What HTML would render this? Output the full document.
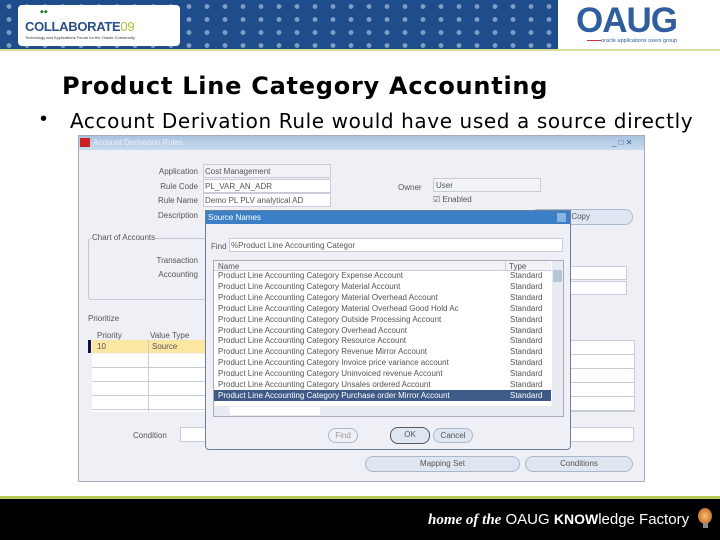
<!DOCTYPE html>
<html><head><meta charset="utf-8"><style>
*{margin:0;padding:0;box-sizing:border-box}
body{width:720px;height:540px;position:relative;overflow:hidden;background:#fff;font-family:"Liberation Sans",sans-serif}
.a{position:absolute}
.s{font-size:8px;color:#555;white-space:nowrap}
.f{position:absolute;background:#fff;border:1px solid #c8ccd6}
.btn{position:absolute;border:1px solid #a9b8cc;border-radius:8px;background:#dde6f1;font-size:8px;color:#555;text-align:center;line-height:14px}
</style></head><body>
<!-- header -->
<div class="a" style="left:0;top:0;width:558px;height:50px;background:#1f4d8b;background-image:radial-gradient(circle,#7f9cc4 2.2px,transparent 2.6px);background-size:18px 13px"></div>
<div class="a" style="left:558px;top:0;width:162px;height:50px;background:#fff"></div>
<div class="a" style="left:0;top:49px;width:720px;height:2px;background:#d7df9a"></div>
<div class="a" style="left:18px;top:5px;width:162px;height:41px;background:#fff;border-radius:4px"></div>
<div class="a" style="left:40px;top:9px;font-size:5px;color:#2a7a3a">◆◆</div>
<div class="a" style="left:25px;top:19px;font-size:13px;font-weight:bold;color:#2a4f8a;letter-spacing:-0.3px">COLLABORATE<span style="color:#a8c23a;font-weight:normal">09</span></div>
<div class="a" style="left:25px;top:35px;font-size:4px;color:#333">Technology and Applications Forum for the Oracle Community</div>
<div class="a" style="left:576px;top:1px;font-size:35px;font-weight:bold;color:#2f5d9e;letter-spacing:-1px">OAUG</div>
<div class="a" style="left:601px;top:38px;font-size:5.5px;color:#2f5d9e">oracle applications users group</div>
<div class="a" style="left:587px;top:40px;width:14px;height:1px;background:#c33"></div>
<!-- title -->
<div class="a" style="left:62px;top:72px;font-family:'DejaVu Sans',sans-serif;font-size:24px;font-weight:bold;color:#000;white-space:nowrap;letter-spacing:0.75px">Product Line Category Accounting</div>
<div class="a" style="left:40px;top:108px;font-size:20px;color:#000;white-space:nowrap">•</div>
<div class="a" style="left:70px;top:109px;font-family:'DejaVu Sans',sans-serif;font-size:20px;color:#000;white-space:nowrap;letter-spacing:0.6px">Account Derivation Rule would have used a source directly</div>
<!-- window -->
<div class="a" style="left:78px;top:135px;width:567px;height:347px;background:#eef0f5;border:1px solid #aab"></div>
<div class="a" style="left:79px;top:136px;width:565px;height:14px;background:linear-gradient(#a9c3de,#c9dbed)"></div>
<div class="a" style="left:80px;top:138px;width:10px;height:9px;background:#c22"></div>
<div class="a s" style="left:93px;top:138px;color:#eef">Account Derivation Rules</div>
<div class="a" style="left:612px;top:138px;width:30px;height:9px;font-size:8px;color:#35a">_ □ ✕</div>
<div class="a s" style="left:120px;top:167px;width:78px;text-align:right">Application</div>
<div class="f" style="left:203px;top:164px;width:128px;height:14px;background:#f2f3f7"></div><div class="a s" style="left:205px;top:167px">Cost Management</div>
<div class="a s" style="left:120px;top:182px;width:78px;text-align:right">Rule Code</div>
<div class="f" style="left:203px;top:179px;width:128px;height:14px"></div><div class="a s" style="left:205px;top:182px">PL_VAR_AN_ADR</div>
<div class="a s" style="left:120px;top:196px;width:78px;text-align:right">Rule Name</div>
<div class="f" style="left:203px;top:193px;width:128px;height:14px"></div><div class="a s" style="left:205px;top:196px">Demo PL PLV analytical AD</div>
<div class="a s" style="left:120px;top:211px;width:78px;text-align:right">Description</div>
<div class="a s" style="left:398px;top:183px">Owner</div>
<div class="f" style="left:433px;top:178px;width:108px;height:14px;background:#f2f3f7"></div><div class="a s" style="left:436px;top:181px">User</div>
<div class="a s" style="left:433px;top:195px">☑ Enabled</div>
<div class="btn" style="left:530px;top:209px;width:103px;height:16px;text-align:right;padding-right:42px">Copy</div>
<div class="a" style="left:88px;top:238px;width:120px;height:62px;border:1px solid #c5c8d2;border-radius:3px"></div>
<div class="a s" style="left:92px;top:233px;background:#eef0f5">Chart of Accounts</div>
<div class="a s" style="left:120px;top:256px;width:78px;text-align:right">Transaction</div>
<div class="a s" style="left:120px;top:270px;width:78px;text-align:right">Accounting</div>
<div class="f" style="left:555px;top:266px;width:72px;height:14px"></div>
<div class="f" style="left:555px;top:281px;width:72px;height:14px"></div>
<div class="a s" style="left:88px;top:314px">Prioritize</div>
<div class="a s" style="left:97px;top:331px">Priority</div>
<div class="a s" style="left:150px;top:331px">Value Type</div>
<div class="a" style="left:88px;top:340px;width:3px;height:13px;background:#114"></div>
<div class="a" style="left:92px;top:340px;width:115px;height:13px;background:#fbe6a2"></div>
<div class="a s" style="left:97px;top:342px">10</div><div class="a s" style="left:152px;top:342px">Source</div>
<div class="a" style="left:92px;top:354px;width:115px;height:58px;background:repeating-linear-gradient(#fff 0 13px,#c8ccd6 13px 14px)"></div>
<div class="a" style="left:148px;top:340px;width:1px;height:72px;background:#c8ccd6"></div>
<div class="a" style="left:555px;top:340px;width:80px;height:72px;background:repeating-linear-gradient(#fff 0 13px,#c8ccd6 13px 14px);border:1px solid #c8ccd6"></div>
<div class="a s" style="left:133px;top:431px">Condition</div>
<div class="f" style="left:180px;top:427px;width:30px;height:15px"></div>
<div class="f" style="left:560px;top:427px;width:74px;height:15px"></div>
<div class="btn" style="left:365px;top:456px;width:155px;height:16px">Mapping Set</div>
<div class="btn" style="left:525px;top:456px;width:108px;height:16px">Conditions</div>
<!-- dialog -->
<div class="a" style="left:205px;top:210px;width:366px;height:240px;background:#eef0f5;border:1px solid #6d7e99;border-radius:0 0 4px 4px"></div>
<div class="a" style="left:206px;top:211px;width:364px;height:13px;background:#3b80c6"></div>
<div class="a s" style="left:208px;top:213px;color:#fff">Source Names</div>
<div class="a" style="left:557px;top:213px;width:9px;height:9px;background:#8bb4e0"></div>
<div class="a s" style="left:211px;top:242px">Find</div>
<div class="f" style="left:229px;top:238px;width:334px;height:14px"></div>
<div class="a s" style="left:231px;top:241px">%Product Line Accounting Categor</div>
<div class="a" style="left:213px;top:260px;width:351px;height:157px;background:#fff;border:1px solid #aab"></div>
<div class="a" style="left:214px;top:261px;width:337px;height:10px;background:#f2f3f6;border-bottom:1px solid #ccd"></div>
<div class="a s" style="left:218px;top:262px">Name</div><div class="a s" style="left:509px;top:262px">Type</div>
<div class="a" style="left:505px;top:261px;width:1px;height:10px;background:#ccd"></div>
<div class="a" style="left:552px;top:261px;width:11px;height:145px;background:#e8ecf2"></div>
<div class="a" style="left:553px;top:270px;width:9px;height:12px;background:#b6c6da"></div>
<div class="a" style="left:214px;top:406px;width:349px;height:10px;background:#e8ecf2"></div>
<div class="a" style="left:230px;top:407px;width:90px;height:8px;background:#fff"></div>
<div class="a" style="left:214px;top:390px;width:337px;height:11px;background:#3e5b88"></div>
<div class="a s" style="left:218px;top:271px;line-height:10.9px">
Product Line Accounting Category Expense Account<br>Product Line Accounting Category Material Account<br>Product Line Accounting Category Material Overhead Account<br>Product Line Accounting Category Material Overhead Good Hold Ac<br>Product Line Accounting Category Outside Processing Account<br>Product Line Accounting Category Overhead Account<br>Product Line Accounting Category Resource Account<br>Product Line Accounting Category Revenue Mirror Account<br>Product Line Accounting Category Invoice price variance account<br>Product Line Accounting Category Uninvoiced revenue Account<br>Product Line Accounting Category Unsales ordered Account<br><span style="color:#fff">Product Line Accounting Category Purchase order Mirror Account</span></div>
<div class="a s" style="left:510px;top:271px;line-height:10.9px">Standard<br>Standard<br>Standard<br>Standard<br>Standard<br>Standard<br>Standard<br>Standard<br>Standard<br>Standard<br>Standard<br><span style="color:#fff">Standard</span></div>
<div class="btn" style="left:328px;top:428px;width:30px;height:15px;color:#999;background:#eef0f5">Find</div>
<div class="btn" style="left:390px;top:427px;width:40px;height:17px;border-color:#556">OK</div>
<div class="btn" style="left:433px;top:428px;width:40px;height:15px">Cancel</div>
<!-- footer -->
<div class="a" style="left:0;top:496px;width:720px;height:3px;background:#b5cc5a"></div>
<div class="a" style="left:0;top:499px;width:720px;height:41px;background:#000"></div>
<div class="a" style="left:428px;top:511px;font-size:15px;color:#fff;white-space:nowrap"><i style="font-family:'Liberation Serif',serif;font-weight:bold">home of the</i> OAUG <b style="font-size:14px">KNOW</b>ledge Factory</div>
<div class="a" style="left:698px;top:508px;width:14px;height:16px;border-radius:50%;background:radial-gradient(#f7c06a,#b5541c)"></div>
<div class="a" style="left:703px;top:523px;width:5px;height:5px;background:#888"></div>
</body></html>
